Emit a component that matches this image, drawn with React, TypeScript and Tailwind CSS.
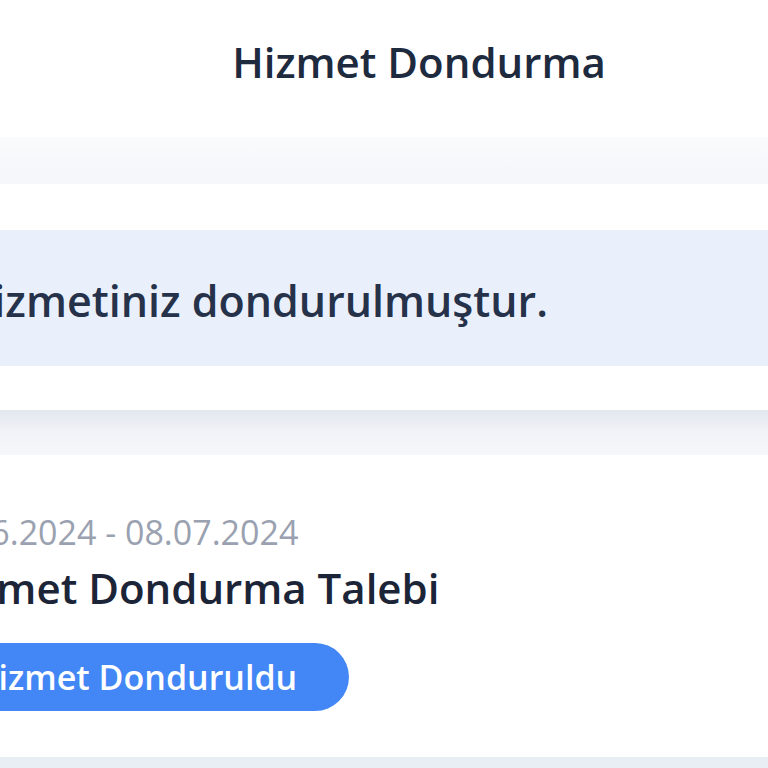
export default function App() {
  return (
    <div
      className="w-[768px] h-[768px] overflow-hidden bg-white flex flex-col"
      style={{ fontFamily: '"Open Sans", "Noto Sans", sans-serif' }}
    >
      {/* başlık */}
      <header className="h-[137px] shrink-0 flex items-center justify-center pl-[70px] bg-white">
        <h1 className="text-[42px] leading-none font-semibold text-[#1e2a3e] pb-[14px]">Hizmet Dondurma</h1>
      </header>

      <div className="h-[47px] shrink-0 bg-gradient-to-b from-[#fafbfc] to-[#f5f6fa]" />

      {/* bilgi kutusu */}
      <section className="bg-white pt-[46px] pb-[44px] shrink-0">
        <div className="h-[136px] bg-[#e9f0fc] flex items-center">
          <p className="-ml-[39px] pt-[4px] text-[43px] leading-none font-semibold text-[#26324a] whitespace-nowrap">
            Hizmetiniz dondurulmuştur.
          </p>
        </div>
      </section>

      <div className="h-[45px] shrink-0 bg-gradient-to-b from-[#e2e8ef] via-[#f1f3f8] to-[#f6f7fa]" />

      {/* talep kartı */}
      <section className="h-[302px] shrink-0 bg-white pt-[60px]">
        <div className="-ml-[67px] flex flex-col items-start whitespace-nowrap">
          <span className="-ml-[10px] text-[34px] leading-none text-[#9aa1b0]">08.06.2024 - 08.07.2024</span>
          <h2 className="mt-[18px] text-[42px] leading-none font-semibold text-[#1c2538]">Hizmet Dondurma Talebi</h2>
          <span className="mt-[34px] h-[68px] flex items-center rounded-full bg-[#4386f5] pl-[40px] pr-[52px] text-[34px] font-semibold text-white">
            Hizmet Donduruldu
          </span>
        </div>
      </section>

      <div className="flex-1 bg-[#e9edf4]" />
    </div>
  );
}
